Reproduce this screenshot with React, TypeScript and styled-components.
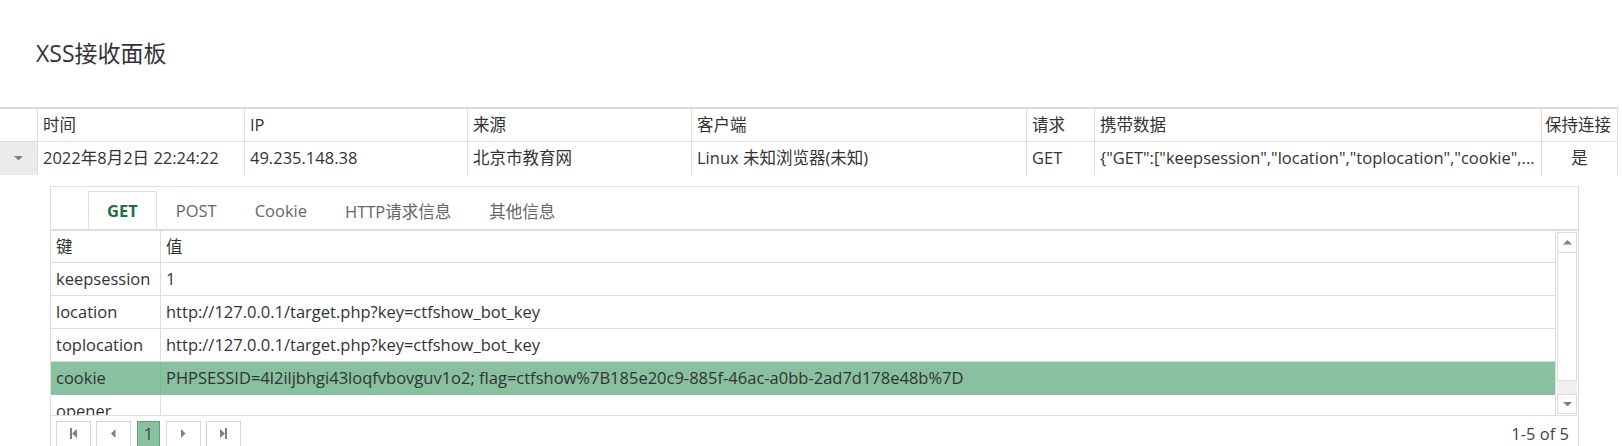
import styled, { createGlobalStyle } from 'styled-components';

// ------------------- Global -------------------

const GlobalStyle = createGlobalStyle`
  body {
    margin: 0;
    background: #fff;
    color: #333;
    font-family: "Open Sans", "Noto Sans CJK SC", sans-serif;
    font-size: 16.5px;
  }
`;

// ------------------- Styled Components -------------------

const Page = styled.div`
  width: 1622px;
  height: 446px;
  overflow: hidden;
`;

const Header = styled.div`
  height: 107px;
  display: flex;
  align-items: center;
  padding: 0 0 4px 36px;
  box-sizing: border-box;
`;

const Title = styled.h1`
  margin: 0;
  font-size: 23px;
  font-weight: 400;
  color: #333;
`;

const MasterGrid = styled.div`
  width: 1618px;
  box-sizing: border-box;
  border-top: 2px solid #dadada;
  border-right: 1px solid #ddd;
`;

const MasterRow = styled.div<{ $head?: boolean }>`
  display: grid;
  grid-template-columns: 37px 207px 223px 224px 335px 68px 447px 76px;
  height: 33px;
  box-sizing: border-box;
  border-bottom: ${({ $head }) => ($head ? '1px solid #ddd' : 'none')};
`;

const Cell = styled.div<{ $center?: boolean; $tight?: boolean }>`
  border-left: 1px solid #ddd;
  padding: 0 ${({ $tight }) => ($tight ? 3 : 5)}px;
  line-height: 32px;
  white-space: nowrap;
  overflow: hidden;
  text-overflow: ${({ $tight }) => ($tight ? 'clip' : 'ellipsis')};
  text-align: ${({ $center }) => ($center ? 'center' : 'left')};
`;

const ExpandCell = styled.div<{ $filled?: boolean }>`
  display: flex;
  align-items: center;
  justify-content: center;
  background: ${({ $filled }) => ($filled ? '#ebebeb' : 'transparent')};
`;

const DetailArea = styled.div`
  padding: 11px 0 0 50px;
`;

const Panel = styled.div`
  width: 1529px;
  box-sizing: border-box;
  border: 1px solid #ddd;
  border-bottom: none;
`;

const TabStrip = styled.div`
  display: flex;
  padding: 4px 0 0 37px;
  border-bottom: 1px solid #ddd;
`;

const Tab = styled.div<{ $active?: boolean }>`
  height: 37px;
  padding: 0 18px;
  display: flex;
  align-items: center;
  border: 1px solid ${({ $active }) => ($active ? '#ddd' : 'transparent')};
  border-bottom: none;
  color: ${({ $active }) => ($active ? '#1e7145' : '#666')};
  font-weight: ${({ $active }) => ($active ? 700 : 400)};
`;

const DetailBody = styled.div`
  display: flex;
  border-top: 1px solid #ddd;
  height: 184px;
`;

const DetailTable = styled.div`
  width: 1505px;
  box-sizing: border-box;
  border-right: 1px solid #ddd;
  overflow: hidden;
`;

const DetailRow = styled.div<{ $head?: boolean; $selected?: boolean }>`
  display: grid;
  grid-template-columns: 109px 1fr;
  height: ${({ $head }) => ($head ? 32 : 33)}px;
  box-sizing: border-box;
  border-bottom: 1px solid ${({ $selected }) => ($selected ? '#88c0a0' : '#ddd')};
  background: ${({ $selected }) => ($selected ? '#88c0a0' : '#fff')};

  & > div + div {
    border-left: 1px solid ${({ $selected }) => ($selected ? '#80b898' : '#ddd')};
  }
`;

const DetailCell = styled.div`
  padding: 0 5px;
  line-height: 32px;
  white-space: nowrap;
  overflow: hidden;
`;

const ScrollBar = styled.div`
  width: 22px;
  box-sizing: border-box;
  padding: 1px 1px 0;
  display: flex;
  flex-direction: column;
`;

const ScrollButton = styled.div<{ $h: number }>`
  height: ${({ $h }) => $h}px;
  box-sizing: border-box;
  border: 1px solid #ddd;
  background: #fff;
  display: flex;
  align-items: center;
  justify-content: center;
`;

const ScrollThumb = styled.div`
  height: 128px;
  box-sizing: border-box;
  border: 1px solid #ddd;
  border-top: none;
  background: #fff;
`;

const ScrollTrack = styled.div`
  flex: 0 0 13px;
  background: #f0f0f0;
`;

const Pager = styled.div`
  display: flex;
  align-items: center;
  gap: 5px;
  height: 35px;
  padding: 0 9px 0 5px;
  border-top: 1px solid #ddd;
`;

const PageButton = styled.div<{ $current?: boolean }>`
  width: ${({ $current }) => ($current ? 23 : 35)}px;
  height: 26px;
  margin: ${({ $current }) => ($current ? '0 1px' : '0')};
  box-sizing: border-box;
  display: flex;
  align-items: center;
  justify-content: center;
  border: 1px solid ${({ $current }) => ($current ? '#5ba37a' : '#d8d8d8')};
  background: ${({ $current }) => ($current ? '#88c0a0' : '#fff')};
  color: #444;
`;

const PagerInfo = styled.div`
  margin-left: auto;
  color: #444;
`;

// ------------------- Icons -------------------

const Caret = ({ dir, size = 9 }: { dir: 'up' | 'down' | 'left' | 'right'; size?: number }) => {
    const points = {
        down: '0,0 8,0 4,4',
        up: '0,4 8,4 4,0',
        left: '4,0 4,8 0,4',
        right: '0,0 0,8 4,4',
    }[dir];
    const vertical = dir === 'up' || dir === 'down';
    return (
        <svg width={vertical ? size : size / 2} height={vertical ? size / 2 : size} viewBox={vertical ? '0 0 8 4' : '0 0 4 8'}>
            <polygon points={points} fill="#808080" />
        </svg>
    );
};

const EdgeIcon = ({ dir }: { dir: 'first' | 'last' }) => (
    <svg width="7" height="11" viewBox="0 0 7 11">
        {dir === 'first' ? (
            <>
                <rect x="0" y="0" width="2" height="11" fill="#808080" />
                <polygon points="7,1 7,10 2,5.5" fill="#808080" />
            </>
        ) : (
            <>
                <polygon points="0,1 0,10 5,5.5" fill="#808080" />
                <rect x="5" y="0" width="2" height="11" fill="#808080" />
            </>
        )}
    </svg>
);

// ------------------- Data -------------------

const masterHeaders = ['时间', 'IP', '来源', '客户端', '请求', '携带数据', '保持连接'];

const record = {
    time: '2022年8月2日 22:24:22',
    ip: '49.235.148.38',
    source: '北京市教育网',
    client: 'Linux 未知浏览器(未知)',
    method: 'GET',
    data: '{"GET":["keepsession","location","toplocation","cookie",...',
    keep: '是',
};

const tabs = ['GET', 'POST', 'Cookie', 'HTTP请求信息', '其他信息'];

const params = [
    { key: 'keepsession', value: '1' },
    { key: 'location', value: 'http://127.0.0.1/target.php?key=ctfshow_bot_key' },
    { key: 'toplocation', value: 'http://127.0.0.1/target.php?key=ctfshow_bot_key' },
    {
        key: 'cookie',
        value: 'PHPSESSID=4l2iljbhgi43loqfvbovguv1o2; flag=ctfshow%7B185e20c9-885f-46ac-a0bb-2ad7d178e48b%7D',
        selected: true,
    },
    { key: 'opener', value: '' },
];

// ------------------- App -------------------

export default function App() {
    return (
        <Page>
            <GlobalStyle />
            <Header>
                <Title>XSS接收面板</Title>
            </Header>

            <MasterGrid>
                <MasterRow $head>
                    <ExpandCell />
                    {masterHeaders.map((h, i) => (
                        <Cell key={h} $tight={i === masterHeaders.length - 1}>
                            {h}
                        </Cell>
                    ))}
                </MasterRow>
                <MasterRow>
                    <ExpandCell $filled>
                        <Caret dir="down" />
                    </ExpandCell>
                    <Cell>{record.time}</Cell>
                    <Cell>{record.ip}</Cell>
                    <Cell>{record.source}</Cell>
                    <Cell>{record.client}</Cell>
                    <Cell>{record.method}</Cell>
                    <Cell>{record.data}</Cell>
                    <Cell $center>{record.keep}</Cell>
                </MasterRow>
            </MasterGrid>

            <DetailArea>
                <Panel>
                    <TabStrip>
                        {tabs.map((t, i) => (
                            <Tab key={t} $active={i === 0}>
                                {t}
                            </Tab>
                        ))}
                    </TabStrip>
                    <DetailBody>
                        <DetailTable>
                            <DetailRow $head>
                                <DetailCell>键</DetailCell>
                                <DetailCell>值</DetailCell>
                            </DetailRow>
                            {params.map(p => (
                                <DetailRow key={p.key} $selected={p.selected}>
                                    <DetailCell>{p.key}</DetailCell>
                                    <DetailCell>{p.value}</DetailCell>
                                </DetailRow>
                            ))}
                        </DetailTable>
                        <ScrollBar>
                            <ScrollButton $h={21}>
                                <Caret dir="up" />
                            </ScrollButton>
                            <ScrollThumb />
                            <ScrollTrack />
                            <ScrollButton $h={20}>
                                <Caret dir="down" />
                            </ScrollButton>
                        </ScrollBar>
                    </DetailBody>
                    <Pager>
                        <PageButton>
                            <EdgeIcon dir="first" />
                        </PageButton>
                        <PageButton>
                            <Caret dir="left" />
                        </PageButton>
                        <PageButton $current>1</PageButton>
                        <PageButton>
                            <Caret dir="right" />
                        </PageButton>
                        <PageButton>
                            <EdgeIcon dir="last" />
                        </PageButton>
                        <PagerInfo>1-5 of 5</PagerInfo>
                    </Pager>
                </Panel>
            </DetailArea>
        </Page>
    );
}
